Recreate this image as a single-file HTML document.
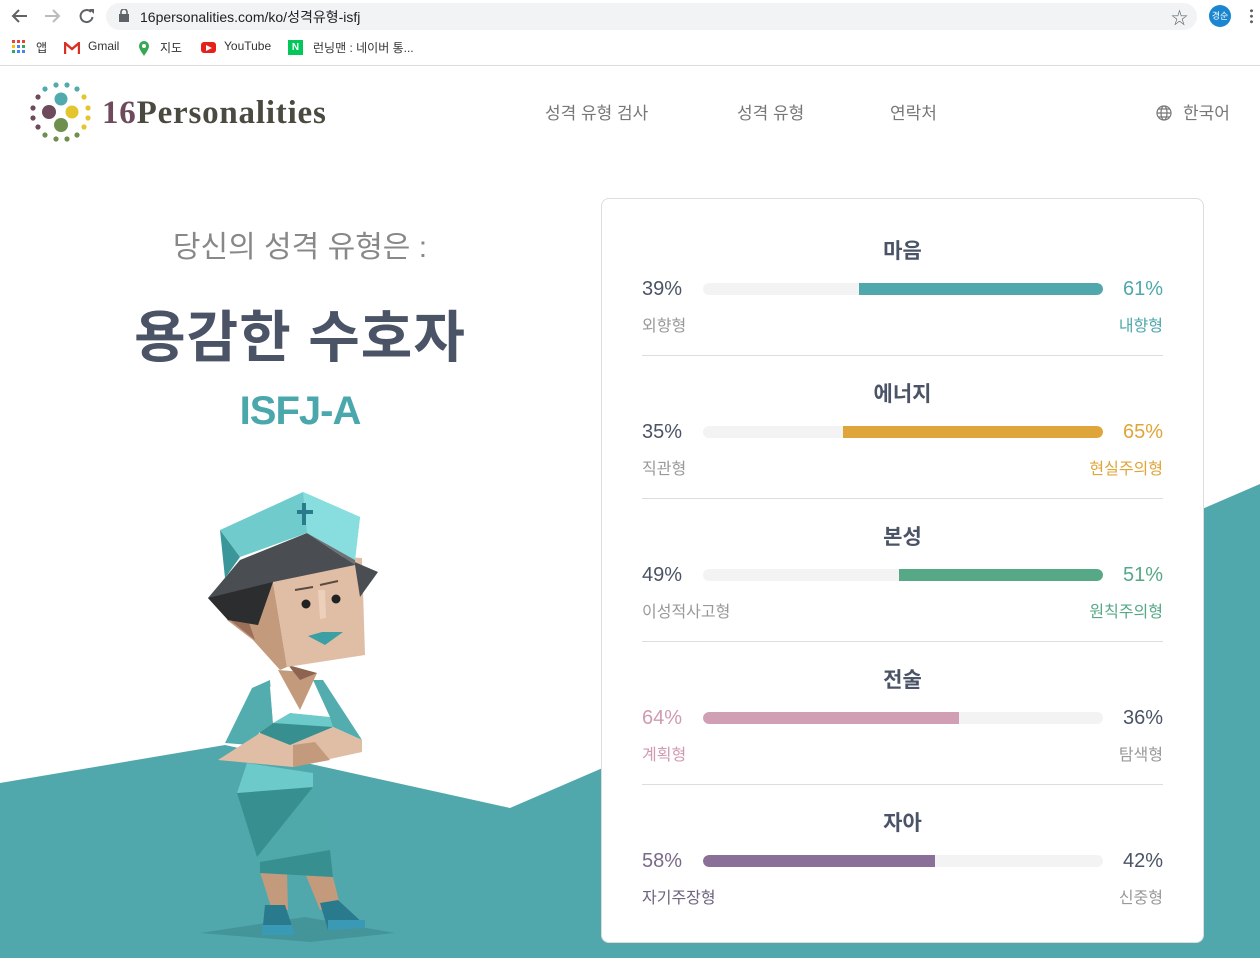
<!DOCTYPE html>
<html><head><meta charset="utf-8"><style>
*{margin:0;padding:0;box-sizing:border-box}
body{width:1260px;height:958px;overflow:hidden;background:#fff;font-family:"Liberation Sans","Noto Sans CJK KR",sans-serif;position:relative}
.abs{position:absolute;white-space:nowrap}
.chrome{position:absolute;left:0;top:0;width:1260px;height:66px;background:#fff;border-bottom:1px solid #dadce0}
.addr{position:absolute;left:106px;top:3px;width:1091px;height:27px;background:#f1f3f4;border-radius:14px}
.bm{font-size:12px;color:#333;top:39px}
.nav{font-size:17px;color:#777;top:99px}
.card{position:absolute;left:601px;top:198px;width:603px;height:745px;background:#fff;border:1px solid #ddd;border-radius:8px}
.sec{position:absolute;left:40px;width:521px;height:143px}
.t{position:absolute;left:0;width:521px;text-align:center;top:36px;font-size:21px;font-weight:bold;color:#4a5466}
.p{position:absolute;top:79px;font-size:20px;color:#4a5466}
.l{position:absolute;top:113px;font-size:16px;color:#999}
.bar{position:absolute;left:61px;top:84px;width:400px;height:12px;background:#f3f3f3;border-radius:6px;overflow:hidden}
.fill{position:absolute;top:0;height:12px}
.div{position:absolute;left:0;top:156px;width:521px;height:1px;background:#ddd}
</style></head><body>
<svg class="abs" style="left:0;top:0" width="1260" height="958">
<polygon points="0,783 225,745 510,808 1260,484 1260,958 0,958" fill="#51a8ac"/>
</svg>
<div class="chrome">
 <svg class="abs" style="left:10px;top:6px" width="90" height="20"><path d="M17 10H3M9 4L3 10l6 6" stroke="#5f6368" stroke-width="2" fill="none"/><path d="M35 10h14M43 4l6 6-6 6" stroke="#bbb" stroke-width="2" fill="none"/><path d="M81 6a6 6 0 1 0 1.5 5" stroke="#5f6368" stroke-width="2" fill="none"/><path d="M79 3h5v5" fill="#5f6368"/></svg>
 <div class="addr"></div>
 <svg class="abs" style="left:118px;top:9px" width="12" height="14"><rect x="1" y="5" width="10" height="8" fill="#5f6368"/><path d="M3 5V3a3 3 0 0 1 6 0v2" stroke="#5f6368" stroke-width="1.6" fill="none"/></svg>
 <div class="abs" style="left:140px;top:7px;font-size:14px;color:#202124">16personalities.com/ko/성격유형-isfj</div>
 <div class="abs" style="left:1171px;top:4px;font-size:17px;color:#5f6368">☆</div>
 <div class="abs" style="left:1209px;top:5px;width:22px;height:22px;border-radius:50%;background:#1a86d0;color:#fff;font-size:9px;text-align:center;line-height:22px">경순</div>
 <div class="abs" style="left:1250px;top:8px;width:3px;height:16px;background:radial-gradient(circle,#5f6368 1.4px,transparent 1.6px) 0 0/3px 5.5px"></div>
 <svg class="abs" style="left:12px;top:40px" width="14" height="14"><g fill="#4285f4"><rect x="0" y="0" width="3" height="3" fill="#ea4335"/><rect x="5" y="0" width="3" height="3" fill="#ea4335"/><rect x="10" y="0" width="3" height="3" fill="#ea4335"/><rect x="0" y="5" width="3" height="3" fill="#fbbc05"/><rect x="5" y="5" width="3" height="3"/><rect x="10" y="5" width="3" height="3" fill="#34a853"/><rect x="0" y="10" width="3" height="3" fill="#34a853"/><rect x="5" y="10" width="3" height="3"/><rect x="10" y="10" width="3" height="3"/></g></svg>
 <div class="abs bm" style="left:36px">앱</div>
 <svg class="abs" style="left:64px;top:42px" width="16" height="12"><path d="M1 12V1l7 6 7-6v11" stroke="#d93025" stroke-width="2.4" fill="none"/></svg>
 <div class="abs bm" style="left:88px">Gmail</div>
 <svg class="abs" style="left:138px;top:40px" width="12" height="16"><path d="M6 16C2 10 1 8 1 6a5 5 0 0 1 10 0c0 2-1 4-5 10z" fill="#34a853"/><circle cx="6" cy="6" r="2" fill="#fff"/></svg>
 <div class="abs bm" style="left:160px">지도</div>
 <div class="abs" style="left:201px;top:42px;width:15px;height:11px;background:#e62117;border-radius:3px"></div>
 <div class="abs" style="left:206px;top:45px;border-left:6px solid #fff;border-top:3px solid transparent;border-bottom:3px solid transparent"></div>
 <div class="abs bm" style="left:224px">YouTube</div>
 <div class="abs" style="left:288px;top:40px;width:15px;height:15px;background:#03c75a;color:#fff;font-size:10px;font-weight:bold;text-align:center;line-height:15px">N</div>
 <div class="abs bm" style="left:313px">런닝맨 : 네이버 통...</div>
</div>
<svg class="abs" style="left:28px;top:80px" width="70" height="66">
<g fill="#51aaae"><circle cx="17" cy="9" r="2.6"/><circle cx="28" cy="5" r="2.6"/><circle cx="39" cy="5" r="2.6"/><circle cx="49" cy="9" r="2.6"/><circle cx="33" cy="19" r="6.5"/></g>
<g fill="#6e4a5c"><circle cx="10" cy="17" r="2.6"/><circle cx="5" cy="28" r="2.6"/><circle cx="5" cy="38" r="2.6"/><circle cx="10" cy="47" r="2.6"/><circle cx="21" cy="32" r="7"/></g>
<g fill="#e3c62e"><circle cx="56" cy="17" r="2.6"/><circle cx="60" cy="28" r="2.6"/><circle cx="60" cy="38" r="2.6"/><circle cx="56" cy="47" r="2.6"/><circle cx="44" cy="32" r="6.5"/></g>
<g fill="#6e8f4e"><circle cx="17" cy="55" r="2.6"/><circle cx="28" cy="59" r="2.6"/><circle cx="39" cy="59" r="2.6"/><circle cx="49" cy="55" r="2.6"/><circle cx="33" cy="45" r="7"/></g>
</svg>
<div class="abs" style="left:102px;top:95px;font-family:'Liberation Serif',serif;font-size:33px;font-weight:bold;color:#4a4a40;letter-spacing:0.8px"><span style="color:#6e4a5c">16</span>Personalities</div>
<div class="abs nav" style="left:545px">성격 유형 검사</div>
<div class="abs nav" style="left:737px">성격 유형</div>
<div class="abs nav" style="left:890px">연락처</div>
<svg class="abs" style="left:1156px;top:105px" width="16" height="16"><g stroke="#777" fill="none" stroke-width="1.2"><circle cx="8" cy="8" r="7"/><ellipse cx="8" cy="8" rx="3" ry="7"/><path d="M1 8h14M2.5 4h11M2.5 12h11"/></g></svg>
<div class="abs nav" style="left:1183px">한국어</div>

<div class="abs" style="left:0;width:600px;text-align:center;top:222px;font-size:30px;color:#888">당신의 성격 유형은 :</div>
<div class="abs" style="left:0;width:600px;text-align:center;top:293px;font-size:56px;font-weight:bold;color:#4a5466;letter-spacing:1px">용감한 수호자</div>
<div class="abs" style="left:0;width:600px;text-align:center;top:389px;font-size:40px;font-weight:bold;color:#4aa8ac;letter-spacing:-1px">ISFJ-A</div>

<svg class="abs" style="left:0;top:0" width="600" height="958">
<polygon points="200,933 305,917 395,933 310,942" fill="#44959a"/>
<polygon points="260,872 287,873 288,910 272,910" fill="#c49a7c"/>
<polygon points="305,873 333,877 340,905 320,910" fill="#c49a7c"/>
<polygon points="265,905 285,905 295,935 262,935" fill="#2a7a8e"/>
<polygon points="262,925 292,925 295,935 262,935" fill="#3a9ab5"/>
<polygon points="320,903 338,900 365,925 328,930" fill="#2a7a8e"/>
<polygon points="328,920 365,920 365,928 328,930" fill="#3a9ab5"/>
<polygon points="237,793 247,763 313,773 330,850 333,877 260,873" fill="#4fa9ab"/>
<polygon points="237,793 313,787 257,857" fill="#37908f"/>
<polygon points="247,763 313,773 313,787 237,793" fill="#6ccacb"/>
<polygon points="260,862 330,850 333,877 260,873" fill="#37908f"/>
<polygon points="225,743 252,688 270,680 273,723 260,732 250,745" fill="#53adae"/>
<polygon points="313,680 323,680 362,740 333,727" fill="#53adae"/>
<polygon points="260,732 273,723 290,713 330,717 333,727 290,753 262,752" fill="#37908f"/>
<polygon points="273,723 290,713 330,717 333,727" fill="#6ccacb"/>
<polygon points="270,687 313,680 330,717 290,713 273,723" fill="#fff"/>
<polygon points="278,670 317,673 300,710" fill="#c49a7c"/>
<polygon points="288,665 317,673 300,680" fill="#8c6450"/>
<polygon points="218,760 260,733 290,745 333,727 362,740 362,752 293,767" fill="#e0bda5"/>
<polygon points="293,745 315,742 330,760 293,767" fill="#c49a7c"/>
<polygon points="227,620 273,582 287,667 280,670 253,640" fill="#c49a7c"/>
<polygon points="230,620 247,617 255,640" fill="#9c7058"/>
<polygon points="273,582 343,557 362,558 365,655 287,667" fill="#e0bda5"/>
<polygon points="208,598 240,560 307,533 343,557 378,572 360,597 355,565 273,582 258,625 228,620" fill="#4a4e52"/>
<polygon points="208,598 273,582 258,625 228,620" fill="#2c2d2f"/>
<polygon points="307,533 343,557 355,565 355,540" fill="#6e7074"/>
<polygon points="220,530 303,492 360,517 355,560 307,533 240,557" fill="#70cccc"/>
<polygon points="303,492 360,517 355,560 307,533" fill="#88dede"/>
<polygon points="220,530 240,557 225,578" fill="#3a9698"/>
<path d="M304 503v22M297 512h16" stroke="#2a7a8e" stroke-width="4"/>
<path d="M295 590l18-3M320 585l18 -4" stroke="#5a4a40" stroke-width="2"/>
<circle cx="306" cy="604" r="4.5" fill="#222"/><circle cx="336" cy="599" r="4.5" fill="#222"/>
<polygon points="318,590 325,590 326,618 320,619" fill="#ecd0bc"/>
<polygon points="308,636 322,632 343,632 325,645" fill="#3aa0a4"/>
</svg>

<div class="card">
 <div class="sec" style="top:0">
  <div class="t">마음</div><div class="p" style="left:0">39%</div><div class="p" style="right:0;color:#4fa8ab">61%</div>
  <div class="bar"><div class="fill" style="left:156px;width:244px;background:#51a8ac;border-radius:0 6px 6px 0"></div></div>
  <div class="l" style="left:0">외향형</div><div class="l" style="right:0;color:#4fa8ab">내향형</div><div class="div"></div>
 </div>
 <div class="sec" style="top:143px">
  <div class="t">에너지</div><div class="p" style="left:0">35%</div><div class="p" style="right:0;color:#e0a53a">65%</div>
  <div class="bar"><div class="fill" style="left:140px;width:260px;background:#e0a53a;border-radius:0 6px 6px 0"></div></div>
  <div class="l" style="left:0">직관형</div><div class="l" style="right:0;color:#e0a53a">현실주의형</div><div class="div"></div>
 </div>
 <div class="sec" style="top:286px">
  <div class="t">본성</div><div class="p" style="left:0">49%</div><div class="p" style="right:0;color:#56a886">51%</div>
  <div class="bar"><div class="fill" style="left:196px;width:204px;background:#56a886;border-radius:0 6px 6px 0"></div></div>
  <div class="l" style="left:0">이성적사고형</div><div class="l" style="right:0;color:#56a886">원칙주의형</div><div class="div"></div>
 </div>
 <div class="sec" style="top:429px">
  <div class="t">전술</div><div class="p" style="left:0;color:#d09ab2">64%</div><div class="p" style="right:0">36%</div>
  <div class="bar"><div class="fill" style="left:0;width:256px;background:#d09fb4;border-radius:6px 0 0 6px"></div></div>
  <div class="l" style="left:0;color:#d09ab2">계획형</div><div class="l" style="right:0">탐색형</div><div class="div"></div>
 </div>
 <div class="sec" style="top:572px">
  <div class="t">자아</div><div class="p" style="left:0;color:#7a6a88">58%</div><div class="p" style="right:0">42%</div>
  <div class="bar"><div class="fill" style="left:0;width:232px;background:#8a7098;border-radius:6px 0 0 6px"></div></div>
  <div class="l" style="left:0;color:#6e6480">자기주장형</div><div class="l" style="right:0">신중형</div>
 </div>
</div>
</body></html>
